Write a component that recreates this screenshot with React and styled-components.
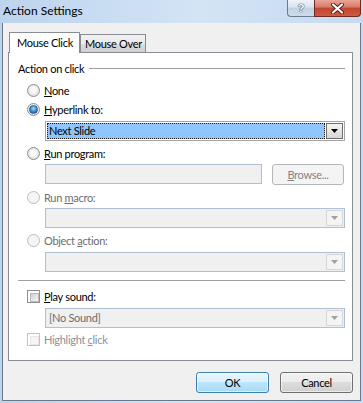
import React from 'react';
import styled, { createGlobalStyle } from 'styled-components';

const GlobalStyle = createGlobalStyle`
  html, body {
    margin: 0;
    padding: 0;
    background: #ffffff;
  }
  body {
    font-family: Lato, "Liberation Sans", sans-serif;
    font-size: 11px;
    letter-spacing: -0.3px;
    color: #000000;
  }
  * {
    box-sizing: border-box;
  }
`;

const Window = styled.div`
  width: 363px;
  height: 403px;
  display: flex;
  flex-direction: column;
  background: linear-gradient(to right, #bdd4ee, #d3e4f5 55%, #c6daf0);
`;

const TitleBar = styled.div`
  height: 23px;
  display: flex;
  align-items: flex-start;
  padding-left: 3px;
`;

const Title = styled.div`
  flex: 1;
  font-size: 12px;
  letter-spacing: 0;
  line-height: 21px;
`;

const CaptionButtons = styled.div`
  display: flex;
  margin-right: 2px;
`;

const HelpButton = styled.div`
  width: 27px;
  height: 17px;
  border: 1px solid #6a7a90;
  border-top: none;
  border-right: none;
  border-bottom-left-radius: 4px;
  background: linear-gradient(#eef3f9, #d9e3ef 45%, #c3d1e2 50%, #cfdbea);
  display: flex;
  align-items: center;
  justify-content: center;
  font-family: "Liberation Sans", sans-serif;
  font-weight: bold;
  font-size: 11px;
  color: #ffffff;
  text-shadow: 0 0 1px #3b4a5e, 0 0 1px #3b4a5e, 0 0 1px #3b4a5e;
`;

const CloseButton = styled.div`
  width: 47px;
  height: 17px;
  border: 1px solid #6e2b22;
  border-top: none;
  border-bottom-right-radius: 4px;
  background: linear-gradient(#e8a597, #d77a66 45%, #c24530 50%, #cf5a40);
  display: flex;
  align-items: center;
  justify-content: center;
`;

const Client = styled.div`
  flex: 1;
  margin: 0 2px 2px;
  border: 1px solid #6c7889;
  border-top: none;
  background: #f0f0f0;
  padding: 9px 7px 0 5px;
  display: flex;
  flex-direction: column;
`;

const TabStrip = styled.div`
  height: 20px;
  display: flex;
  align-items: flex-end;
  padding-left: 1px;
`;

const Tab = styled.div`
  position: relative;
  z-index: 1;
  height: ${(p) => (p.$active ? '21px' : '18px')};
  margin-bottom: ${(p) => (p.$active ? '-1px' : '0')};
  width: ${(p) => p.$w}px;
  border: 1px solid #898c95;
  border-bottom: none;
  background: ${(p) =>
    p.$active
      ? '#ffffff'
      : 'linear-gradient(#f2f2f2, #ebebeb 50%, #dddddd 50%, #cfcfcf)'};
  padding-left: ${(p) => (p.$active ? '7px' : '4px')};
  line-height: ${(p) => (p.$active ? '20px' : '18px')};
  white-space: nowrap;
`;

const Panel = styled.div`
  width: 345px;
  height: 309px;
  border: 1px solid #898c95;
  background: #ffffff;
  padding: 0 7px 0 9px;
  display: flex;
  flex-direction: column;
`;

const SectionHeader = styled.div`
  height: 14px;
  margin-top: 8px;
  display: flex;
  align-items: center;
  gap: 5px;
  &::after {
    content: '';
    flex: 1;
    height: 1px;
    background: #a0a0a0;
  }
`;

const Separator = styled.div`
  height: 1px;
  margin-top: ${(p) => p.$mt}px;
  background: #a0a0a0;
`;

const OptionRow = styled.label`
  height: 14px;
  margin-top: ${(p) => p.$mt}px;
  padding-left: 9px;
  display: flex;
  align-items: center;
  gap: 4px;
  color: ${(p) => (p.$disabled ? p.$dim || '#6d6d6d' : '#000000')};
`;

const Radio = styled.span`
  width: 13px;
  height: 13px;
  border-radius: 50%;
  border: 1px solid ${(p) => (p.$disabled ? '#bcbcbc' : '#8e8f8f')};
  background: ${(p) =>
    p.$disabled
      ? '#f4f4f4'
      : 'radial-gradient(circle at 50% 45%, #f9f9f9 30%, #e2e2e2 70%, #cfcfcf)'};
  display: flex;
  align-items: center;
  justify-content: center;
  flex: none;
  &::after {
    content: '';
    display: ${(p) => (p.$checked ? 'block' : 'none')};
    width: 7px;
    height: 7px;
    border-radius: 50%;
    background: radial-gradient(circle at 50% 35%, #a9dbf7, #3b86c9 55%, #1c558e);
    border: 1px solid #1f5f98;
  }
`;

const Checkbox = styled.span`
  width: 13px;
  height: 13px;
  border: 1px solid ${(p) => (p.$disabled ? '#c3c3c3' : '#8e8f8f')};
  background: #ffffff;
  padding: 2px;
  flex: none;
  &::after {
    content: '';
    display: block;
    width: 100%;
    height: 100%;
    border: 1px solid ${(p) => (p.$disabled ? '#e6e6e6' : '#bcbcbc')};
    background: ${(p) => (p.$disabled ? '#f6f6f6' : 'linear-gradient(135deg, #cbcfd5, #f7f7f7)')};
  }
`;

const FieldRow = styled.div`
  margin-top: ${(p) => p.$mt}px;
  padding-left: 27px;
  display: flex;
  align-items: flex-start;
  gap: 10px;
`;

const Select = styled.div`
  flex: 1;
  height: 20px;
  border: 1px solid ${(p) => (p.$disabled ? '#afc0d3' : '#a5a5a5')};
  background: ${(p) => (p.$disabled ? '#f0f0f0' : '#ffffff')};
  padding: 1px;
  display: flex;
  gap: 1px;
`;

const SelectValue = styled.div`
  flex: 1;
  padding-left: ${(p) => (p.$focused ? '1px' : '2px')};
  line-height: ${(p) => (p.$focused ? '14px' : '16px')};
  background: ${(p) => (p.$focused ? '#8fc6fd' : 'transparent')};
  border: ${(p) => (p.$focused ? '1px dotted #1c1c1c' : 'none')};
  color: ${(p) => (p.$disabled ? '#6d6d6d' : '#000000')};
`;

const DropButton = styled.div`
  width: 17px;
  height: 16px;
  border: 1px solid ${(p) => (p.$disabled ? '#d6d6d6' : '#6d6d6d')};
  background: ${(p) =>
    p.$disabled ? '#f4f4f4' : 'linear-gradient(#f4f4f4, #e6e6e6 50%, #d6d6d6)'};
  display: flex;
  align-items: center;
  justify-content: center;
`;

const TextBox = styled.div`
  width: 217px;
  height: 20px;
  border: 1px solid #afc0d3;
  background: #f0f0f0;
`;

const SmallButton = styled.div`
  width: 72px;
  height: 21px;
  border: 1px solid #b3b7ba;
  border-radius: 3px;
  background: #f4f4f4;
  color: #838383;
  text-align: center;
  line-height: 19px;
`;

const Footer = styled.div`
  margin-top: 11px;
  display: flex;
  justify-content: flex-end;
  gap: 11px;
`;

const DialogButton = styled.div`
  width: 73px;
  height: 21px;
  border: 1px solid ${(p) => (p.$default ? '#3c7fb1' : '#707070')};
  border-radius: 3px;
  background: ${(p) =>
    p.$default
      ? 'linear-gradient(#eaf6fd, #d9f0fc 50%, #bee6fd 50%, #a7d9f5)'
      : 'linear-gradient(#f2f2f2, #ebebeb 50%, #dddddd 50%, #cfcfcf)'};
  box-shadow: inset 0 0 0 1px rgba(255, 255, 255, 0.6);
  text-align: center;
  line-height: 19px;
`;

const Arrow = ({ disabled }) => (
  <svg width="7" height="4" viewBox="0 0 7 4">
    <polygon points="0,0 7,0 3.5,4" fill={disabled ? '#a0a0a0' : '#000000'} />
  </svg>
);

const CloseIcon = () => (
  <svg width="13" height="11" viewBox="0 0 13 11">
    <path d="M2 1.5 L11 9.5 M11 1.5 L2 9.5" stroke="#5a1a12" strokeWidth="4" strokeLinecap="round" />
    <path d="M2 1.5 L11 9.5 M11 1.5 L2 9.5" stroke="#ffffff" strokeWidth="2.2" strokeLinecap="round" />
  </svg>
);

const Combo = ({ value, focused, disabled }) => (
  <Select $disabled={disabled}>
    <SelectValue $focused={focused} $disabled={disabled}>{value}</SelectValue>
    <DropButton $disabled={disabled}>
      <Arrow disabled={disabled} />
    </DropButton>
  </Select>
);

export default function App() {
  return (
    <>
      <GlobalStyle />
      <Window>
        <TitleBar>
          <Title>Action Settings</Title>
          <CaptionButtons>
            <HelpButton>?</HelpButton>
            <CloseButton>
              <CloseIcon />
            </CloseButton>
          </CaptionButtons>
        </TitleBar>
        <Client>
          <TabStrip>
            <Tab $active $w={71}>Mouse Click</Tab>
            <Tab $w={66}>Mouse Over</Tab>
          </TabStrip>
          <Panel>
            <SectionHeader>Action on click</SectionHeader>
            <OptionRow $mt={8}>
              <Radio />
              <span><u>N</u>one</span>
            </OptionRow>
            <OptionRow $mt={5}>
              <Radio $checked />
              <span><u>H</u>yperlink to:</span>
            </OptionRow>
            <FieldRow $mt={5}>
              <Combo value="Next Slide" focused />
            </FieldRow>
            <OptionRow $mt={5}>
              <Radio />
              <span><u>R</u>un program:</span>
            </OptionRow>
            <FieldRow $mt={4}>
              <TextBox />
              <SmallButton><u>B</u>rowse...</SmallButton>
            </FieldRow>
            <OptionRow $mt={5} $disabled>
              <Radio $disabled />
              <span>Run <u>m</u>acro:</span>
            </OptionRow>
            <FieldRow $mt={4}>
              <Combo disabled />
            </FieldRow>
            <OptionRow $mt={5} $disabled>
              <Radio $disabled />
              <span>Object <u>a</u>ction:</span>
            </OptionRow>
            <FieldRow $mt={5}>
              <Combo disabled />
            </FieldRow>
            <Separator $mt={8} />
            <OptionRow $mt={8}>
              <Checkbox />
              <span><u>P</u>lay sound:</span>
            </OptionRow>
            <FieldRow $mt={5}>
              <Combo value="[No Sound]" disabled />
            </FieldRow>
            <OptionRow $mt={4} $disabled $dim="#8a9199">
              <Checkbox $disabled />
              <span>Highlight <u>c</u>lick</span>
            </OptionRow>
          </Panel>
          <Footer>
            <DialogButton $default>OK</DialogButton>
            <DialogButton>Cancel</DialogButton>
          </Footer>
        </Client>
      </Window>
    </>
  );
}
